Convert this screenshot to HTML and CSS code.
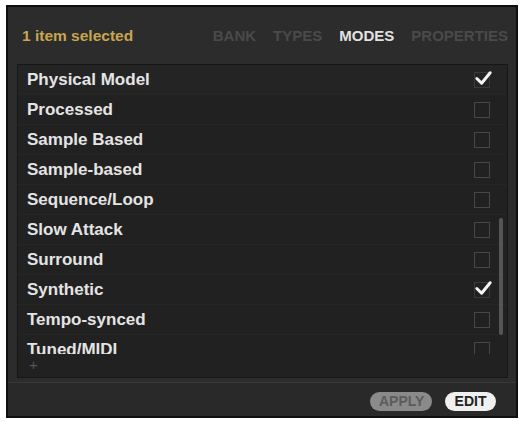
FILE: index.html
```html
<!DOCTYPE html>
<html lang="en">
<head>
    <meta charset="UTF-8">
    <title>Modes</title>
    <link rel="stylesheet" href="styles.css">
</head>
<body>
    <div class="panel">
        <div class="header">
            <span class="selection">1 item selected</span>
            <div class="tabs">
                <span class="tab">BANK</span>
                <span class="tab">TYPES</span>
                <span class="tab active">MODES</span>
                <span class="tab">PROPERTIES</span>
            </div>
        </div>

        <div class="list">
            <div class="viewport">
                <div class="row"><span>Physical Model</span><span class="box checked"><svg viewBox="0 0 20 20"><polyline points="3,10 8,15 17,4"/></svg></span></div>
                <div class="row"><span>Processed</span><span class="box"></span></div>
                <div class="row"><span>Sample Based</span><span class="box"></span></div>
                <div class="row"><span>Sample-based</span><span class="box"></span></div>
                <div class="row"><span>Sequence/Loop</span><span class="box"></span></div>
                <div class="row"><span>Slow Attack</span><span class="box"></span></div>
                <div class="row"><span>Surround</span><span class="box"></span></div>
                <div class="row"><span>Synthetic</span><span class="box checked"><svg viewBox="0 0 20 20"><polyline points="3,10 8,15 17,4"/></svg></span></div>
                <div class="row"><span>Tempo-synced</span><span class="box"></span></div>
                <div class="row"><span>Tuned/MIDI</span><span class="box"></span></div>
                <div class="scrollbar"></div>
            </div>
            <div class="add">+</div>
        </div>

        <div class="actions">
            <button class="btn apply">APPLY</button>
            <button class="btn edit">EDIT</button>
        </div>
    </div>
</body>
</html>
```

FILE: styles.css
```css
body {
    margin: 0;
    background-color: #fff;
    font-family: "Liberation Sans", Arial, sans-serif;
}
.panel {
    box-sizing: border-box;
    width: 512px;
    height: 413px;
    margin: 5px 0 0 6px;
    border: 2px solid #0f0f0f;
    background-color: #2c2c2c;
    display: flex;
    flex-direction: column;
}
.header {
    height: 57px;
    flex-shrink: 0;
    display: flex;
    align-items: center;
    padding: 0 8px 0 14px;
}
.selection {
    color: #c8a64e;
    font-size: 15.5px;
    font-weight: bold;
}
.tabs {
    margin-left: auto;
    display: flex;
    gap: 17px;
}
.tab {
    color: #4a4a4a;
    font-size: 15px;
    font-weight: bold;
}
.tab.active {
    color: #e2e2e2;
}
.list {
    box-sizing: border-box;
    height: 314px;
    flex-shrink: 0;
    margin: 0 8px 0 9px;
    border: 1px solid #161616;
    background-color: #212121;
    display: flex;
    flex-direction: column;
}
.viewport {
    position: relative;
    height: 289px;
    flex-shrink: 0;
    overflow: hidden;
}
.row {
    box-sizing: border-box;
    height: 30px;
    display: flex;
    align-items: center;
    padding-left: 9px;
    border-bottom: 1px solid #262626;
    color: #e4e4e4;
    font-size: 17px;
    font-weight: bold;
}
.row:first-child {
    background-color: #242424;
}
.box {
    box-sizing: border-box;
    width: 16px;
    height: 16px;
    margin-left: auto;
    margin-right: 17px;
    border: 1px solid #474747;
    position: relative;
}
.box.checked {
    border-color: #3a3a3a;
}
.box svg {
    position: absolute;
    left: -1px;
    top: -4px;
    width: 19px;
    height: 19px;
    fill: none;
    stroke: #f4f4f4;
    stroke-width: 3.2;
    stroke-linecap: round;
    stroke-linejoin: round;
}
.scrollbar {
    position: absolute;
    right: 4px;
    top: 153px;
    width: 4px;
    height: 117px;
    border-radius: 2px;
    background-color: #555;
}
.add {
    flex: 1;
    padding: 4px 0 0 11px;
    color: #555;
    font-size: 15px;
    line-height: 14px;
}
.actions {
    flex: 1;
    margin-top: 4px;
    border-top: 1px solid #383838;
    background-color: #292929;
    display: flex;
    justify-content: flex-end;
    align-items: center;
    gap: 13px;
    padding: 3px 20px 0 0;
}
.btn {
    height: 19px;
    border: none;
    border-radius: 10px;
    padding: 0 9px;
    font-family: "Liberation Sans", Arial, sans-serif;
    font-size: 14px;
    font-weight: bold;
    line-height: 19px;
}
.apply {
    width: 62px;
    background-color: #8a8a8a;
    color: #5c5c5c;
}
.edit {
    width: 51px;
    background-color: #f0f0f0;
    color: #222;
}
```
